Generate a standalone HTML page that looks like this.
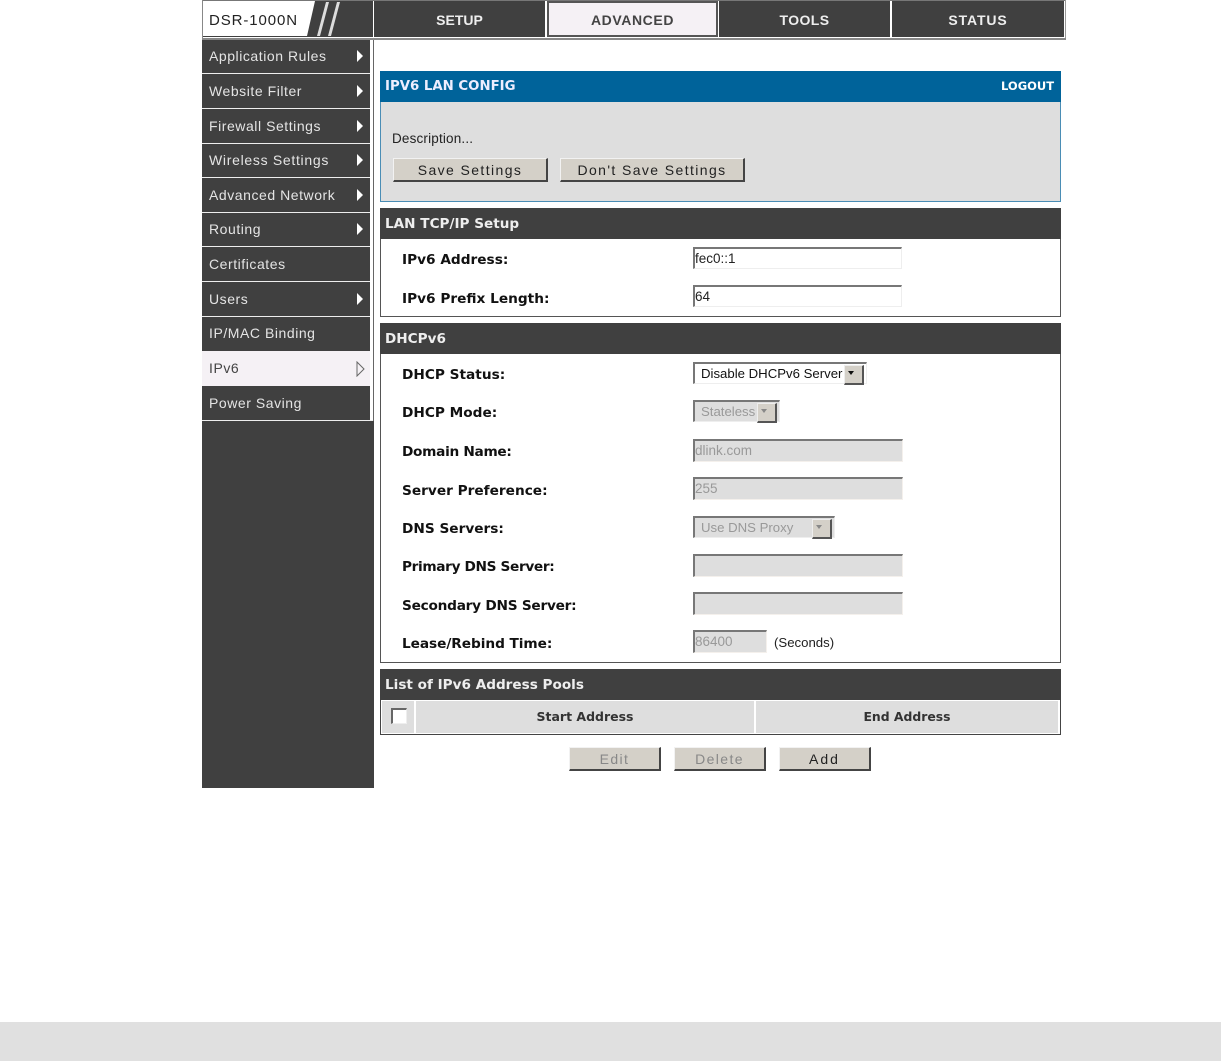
<!DOCTYPE html>
<html><head><meta charset="utf-8"><title>IPv6 LAN Config</title>
<style>
html,body{margin:0;padding:0;background:#fff;width:1221px;height:1061px;overflow:hidden}
body{position:relative;font-family:"Liberation Sans",sans-serif;color:#111}
div,span{position:absolute;box-sizing:border-box;white-space:nowrap}
.tab{top:1px;height:36px;background:#404040;color:#eee;font-size:14px;font-weight:bold;line-height:38px;text-align:center}
.m{left:202px;width:168px;height:33px;background:#404040;color:#e4e4e4;font-size:14px;letter-spacing:.55px;line-height:34px;padding-left:7px}
.u{line-height:32px}
.a{position:absolute;left:155px;top:11px;width:0;height:0;border-left:6px solid #fff;border-top:6.5px solid transparent;border-bottom:6.5px solid transparent}
.u .a{top:10px}
.h{left:380px;width:681px;height:31px;background:#404040;color:#eee;font:bold 13.6px/33px "DejaVu Sans",sans-serif;padding-left:5px}
.b{left:380px;width:681px;border:1px solid #555;border-top:0;background:#fff}
.l{left:402px;margin-top:1px;font:bold 13.7px/20px "DejaVu Sans",sans-serif;color:#111}
.i{left:693px;width:209px;height:22px;background:#fff;border-top:2px solid #777;border-left:2px solid #777;border-right:1px solid #eee;border-bottom:1px solid #eee;font-size:13.5px;line-height:19px;padding-left:0;color:#222}
.d{background:#dedede;color:#999;border-right:1px solid #f4f0ec;border-bottom:1px solid #f4f0ec;width:210px;height:23px}
.s{left:693px;height:22px;background:#fff;border-top:2px solid #777;border-left:2px solid #777;border-right:1px solid #eee;border-bottom:1px solid #eee;font-size:13.2px;line-height:19px;padding-left:6px;color:#111}
.s.d{background:#dedede;color:#999}
.ar{position:absolute;right:2px;top:1px;width:17px;height:17px;background:#d4d0c8;border-top:1px solid #eee;border-left:1px solid #eee;border-right:2px solid #555;border-bottom:2px solid #555}
.ar:after{content:"";position:absolute;left:3px;top:5px;border-left:3.5px solid transparent;border-right:3.5px solid transparent;border-top:4px solid #111}
.d .ar:after{border-top-color:#888}
.btn{background:#d4d0c8;border-top:1px solid #f2f2f2;border-left:1px solid #f2f2f2;border-right:2px solid #444;border-bottom:2px solid #444;text-align:center;font-size:14px;letter-spacing:1.4px;color:#222;line-height:22px}
</style></head><body>

<div style="left:202px;top:0;width:864px;height:1px;background:#777"></div>
<div style="left:202px;top:38px;width:864px;height:2px;background:#888"></div>
<div style="left:1065px;top:0;width:1px;height:38px;background:#999"></div>
<div style="left:202px;top:0;width:1px;height:38px;background:#888"></div>

<div style="left:203px;top:1px;width:170px;height:36px;background:#404040"></div>
<svg style="position:absolute;left:203px;top:1px" width="170" height="36"><polygon points="0,0 112,0 104,35 0,35" fill="#fff"/><polygon points="123,1 126,1 117,35 114,35" fill="#ddd"/><polygon points="134,1 137,1 128,35 125,35" fill="#ddd"/></svg>
<div style="left:209px;top:12px;font-size:15px;line-height:18px;letter-spacing:.9px;color:#222">DSR-1000N</div>

<div class="tab" style="left:374px;width:171px">SETUP</div>
<div class="tab" style="left:547px;width:171px;background:#f5f1f5;color:#444;border:2px solid #555;line-height:34px;letter-spacing:.6px">ADVANCED</div>
<div class="tab" style="left:719px;width:171px;letter-spacing:.4px">TOOLS</div>
<div class="tab" style="left:892px;width:172px;letter-spacing:.9px">STATUS</div>

<div style="left:202px;top:40px;width:172px;height:748px;background:#404040"></div>
<div style="left:370px;top:40px;width:3px;height:381px;background:#fff"></div>
<div style="left:373px;top:40px;width:1px;height:381px;background:#666"></div>

<div class="m u" style="top:40px">Application Rules<i class="a"></i></div>
<div class="m" style="top:74px">Website Filter<i class="a"></i></div>
<div class="m" style="top:109px">Firewall Settings<i class="a"></i></div>
<div class="m u" style="top:144px;letter-spacing:.7px">Wireless Settings<i class="a"></i></div>
<div class="m" style="top:178px">Advanced Network<i class="a"></i></div>
<div class="m u" style="top:213px">Routing<i class="a"></i></div>
<div class="m" style="top:247px">Certificates</div>
<div class="m" style="top:282px">Users<i class="a"></i></div>
<div class="m u" style="top:317px">IP/MAC Binding</div>
<div class="m" style="top:351px;height:35px;background:#f5f1f5;color:#444">IPv6<svg style="position:absolute;left:154px;top:10px" width="10" height="16"><path d="M1 1 L8 8 L1 15 Z" fill="none" stroke="#666"/></svg></div>
<div class="m u" style="top:387px">Power Saving</div>
<div style="left:202px;top:73px;width:168px;height:1px;background:#eee"></div>
<div style="left:202px;top:108px;width:168px;height:1px;background:#eee"></div>
<div style="left:202px;top:143px;width:168px;height:1px;background:#eee"></div>
<div style="left:202px;top:177px;width:168px;height:1px;background:#eee"></div>
<div style="left:202px;top:212px;width:168px;height:1px;background:#eee"></div>
<div style="left:202px;top:246px;width:168px;height:1px;background:#eee"></div>
<div style="left:202px;top:281px;width:168px;height:1px;background:#eee"></div>
<div style="left:202px;top:316px;width:168px;height:1px;background:#eee"></div>
<div style="left:202px;top:420px;width:171px;height:1px;background:#eee"></div>

<div style="left:380px;top:71px;width:681px;height:131px;background:#dedede;border:1px solid #4a8db5"></div>
<div style="left:380px;top:71px;width:681px;height:31px;background:#00639a;color:#eef;font:bold 13.3px/32px 'DejaVu Sans',sans-serif;padding-left:5px">IPV6 LAN CONFIG</div>
<div style="left:1001px;top:71px;color:#fff;font:bold 11.5px/30px 'DejaVu Sans',sans-serif">LOGOUT</div>
<div style="left:392px;top:130px;font-size:13.5px;line-height:17px;letter-spacing:.17px;color:#222">Description...</div>
<div class="btn" style="left:393px;top:158px;width:155px;height:24px">Save Settings</div>
<div class="btn" style="left:560px;top:158px;width:185px;height:24px">Don't Save Settings</div>

<div class="h" style="top:208px">LAN TCP/IP Setup</div>
<div class="b" style="top:239px;height:78px"></div>
<div class="l" style="top:249px">IPv6 Address:</div>
<div class="l" style="top:288px">IPv6 Prefix Length:</div>
<div class="i" style="top:247px">fec0::1</div>
<div class="i" style="top:285px">64</div>

<div class="h" style="top:323px">DHCPv6</div>
<div class="b" style="top:354px;height:309px"></div>
<div class="l" style="top:364px">DHCP Status:</div>
<div class="l" style="top:402px">DHCP Mode:</div>
<div class="l" style="top:441px;letter-spacing:-.3px">Domain Name:</div>
<div class="l" style="top:480px">Server Preference:</div>
<div class="l" style="top:518px">DNS Servers:</div>
<div class="l" style="top:556px;letter-spacing:-.36px">Primary DNS Server:</div>
<div class="l" style="top:595px;letter-spacing:-.25px">Secondary DNS Server:</div>
<div class="l" style="top:633px;letter-spacing:-.06px">Lease/Rebind Time:</div>

<div class="s" style="top:362px;width:174px">Disable DHCPv6 Server<i class="ar"></i></div>
<div class="s d" style="top:400px;width:87px">Stateless<i class="ar"></i></div>
<div class="i d" style="top:439px">dlink.com</div>
<div class="i d" style="top:477px">255</div>
<div class="s d" style="top:516px;width:142px">Use DNS Proxy<i class="ar"></i></div>
<div class="i d" style="top:554px"></div>
<div class="i d" style="top:592px"></div>
<div class="i d" style="top:630px;width:74px">86400</div>
<div style="left:774px;top:634px;font-size:13.2px;line-height:17px;color:#222">(Seconds)</div>

<div class="h" style="top:669px">List of IPv6 Address Pools</div>
<div class="b" style="top:700px;height:35px;border-color:#444"></div>
<div style="left:382px;top:701px;width:32px;height:32px;background:#dedede"></div>
<div style="left:416px;top:701px;width:338px;height:32px;background:#dedede;color:#333;font:bold 12.5px/32px 'DejaVu Sans',sans-serif;text-align:center">Start Address</div>
<div style="left:756px;top:701px;width:302px;height:32px;background:#dedede;color:#333;font:bold 12.4px/32px 'DejaVu Sans',sans-serif;text-align:center">End Address</div>
<div style="left:391px;top:708px;width:16px;height:16px;background:#fff;border-top:2px solid #666;border-left:2px solid #666;border-right:1px solid #eee;border-bottom:1px solid #eee"></div>

<div class="btn" style="left:569px;top:747px;width:92px;height:24px;color:#888">Edit</div>
<div class="btn" style="left:674px;top:747px;width:92px;height:24px;color:#888">Delete</div>
<div class="btn" style="left:779px;top:747px;width:92px;height:24px;letter-spacing:2px">Add</div>

<div style="left:0;top:1022px;width:1221px;height:39px;background:#e0e0e0"></div>
</body></html>
